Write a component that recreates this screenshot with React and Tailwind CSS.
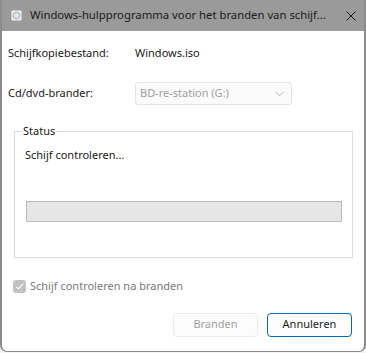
import { useState } from 'react';

const font = { fontFamily: '"Segoe UI", "Noto Sans", sans-serif' };

//[Icon] disc icon in title bar
const DiscIcon = () => (
  <svg width="11" height="11" viewBox="0 0 11 11">
    <rect x="0.5" y="0.5" width="10" height="10" rx="1.5" fill="#f4f4f4" stroke="#c8c8c8" />
    <circle cx="5.5" cy="5.5" r="3.6" fill="#d8dde2" stroke="#9aa3ab" strokeWidth="0.8" />
    <circle cx="5.5" cy="5.5" r="1" fill="#f4f4f4" />
  </svg>
);

const App = () => {
  const [verify] = useState(true);

  return (
    <div className="w-[366px] h-[353px] bg-[#f3f3f3] overflow-hidden" style={font}>
      <div className="w-[366px] h-[352px] flex flex-col bg-white border-x-2 border-b border-[#8c8c8c] rounded-b-[7px] overflow-hidden">
        {/* title bar */}
        <div className="h-[31px] shrink-0 bg-[#9a9a9a] flex items-center pl-[11px] pr-[8px] -mx-[2px]">
          <DiscIcon />
          <span className="ml-[8px] text-[11.3px] text-[#1a1a1a] whitespace-nowrap">
            Windows-hulpprogramma voor het branden van schijf...
          </span>
          <svg className="ml-auto mr-[2px]" width="10" height="10" viewBox="0 0 10 10">
            <path d="M0.5 0.5L9.5 9.5M9.5 0.5L0.5 9.5" stroke="#1a1a1a" strokeWidth="1" />
          </svg>
        </div>

        <div className="flex-1 flex flex-col text-[11px] text-[#1a1a1a]">
          {/* image file */}
          <div className="flex items-center h-[18px] mt-[13px] pl-[6px]">
            <span className="w-[127px]">Schijfkopiebestand:</span>
            <span>Windows.iso</span>
          </div>

          {/* drive select */}
          <div className="flex items-center mt-[20px] pl-[6px]">
            <span className="w-[127px]">Cd/dvd-brander:</span>
            <div className="w-[157px] h-[23px] border border-[#e5e5e5] rounded-[3px] bg-[#fbfbfb] flex items-center pl-[4px] pr-[7px] text-[#a0a0a0]">
              <span>BD-re-station (G:)</span>
              <svg className="ml-auto" width="9" height="6" viewBox="0 0 9 6">
                <path d="M0.5 0.8L4.5 4.8L8.5 0.8" fill="none" stroke="#b5b5b5" strokeWidth="1" />
              </svg>
            </div>
          </div>

          {/* status group */}
          <fieldset className="mt-[19px] ml-[12px] w-[339px] h-[134px] border border-[#dcdcdc] pl-[10px] pr-[10px]">
            <legend className="ml-[-3px] px-[1px] leading-[14px]">Status</legend>
            <div className="mt-[9px] leading-[16px]">Schijf controleren...</div>
            <div className="mt-[38px] ml-[1px] w-[316px] h-[21px] bg-[#e6e6e6] border border-[#bcbcbc]" />
          </fieldset>

          {/* verify checkbox */}
          <div className="flex items-center mt-[20px] pl-[11px] text-[#7a7a7a]">
            <div className="w-[13px] h-[13px] rounded-[3px] bg-[#c2c2c2] flex items-center justify-center">
              {verify && (
                <svg width="9" height="7" viewBox="0 0 9 7">
                  <path d="M1 3.6L3.3 5.8L8 1" fill="none" stroke="#ffffff" strokeWidth="1.1" />
                </svg>
              )}
            </div>
            <span className="ml-[4px]">Schijf controleren na branden</span>
          </div>

          {/* buttons */}
          <div className="flex justify-end gap-[9px] mt-[18px] pr-[12px]">
            <button
              type="button"
              disabled
              className="w-[85px] h-[24px] rounded-[4px] border border-[#ebebeb] bg-[#fcfcfc] text-[#a0a0a0]"
            >
              Branden
            </button>
            <button
              type="button"
              className="w-[85px] h-[24px] rounded-[4px] border border-[#0067c0] bg-[#fdfdfd] text-[#1a1a1a]"
            >
              Annuleren
            </button>
          </div>
        </div>
      </div>
    </div>
  );
};

export default App;
